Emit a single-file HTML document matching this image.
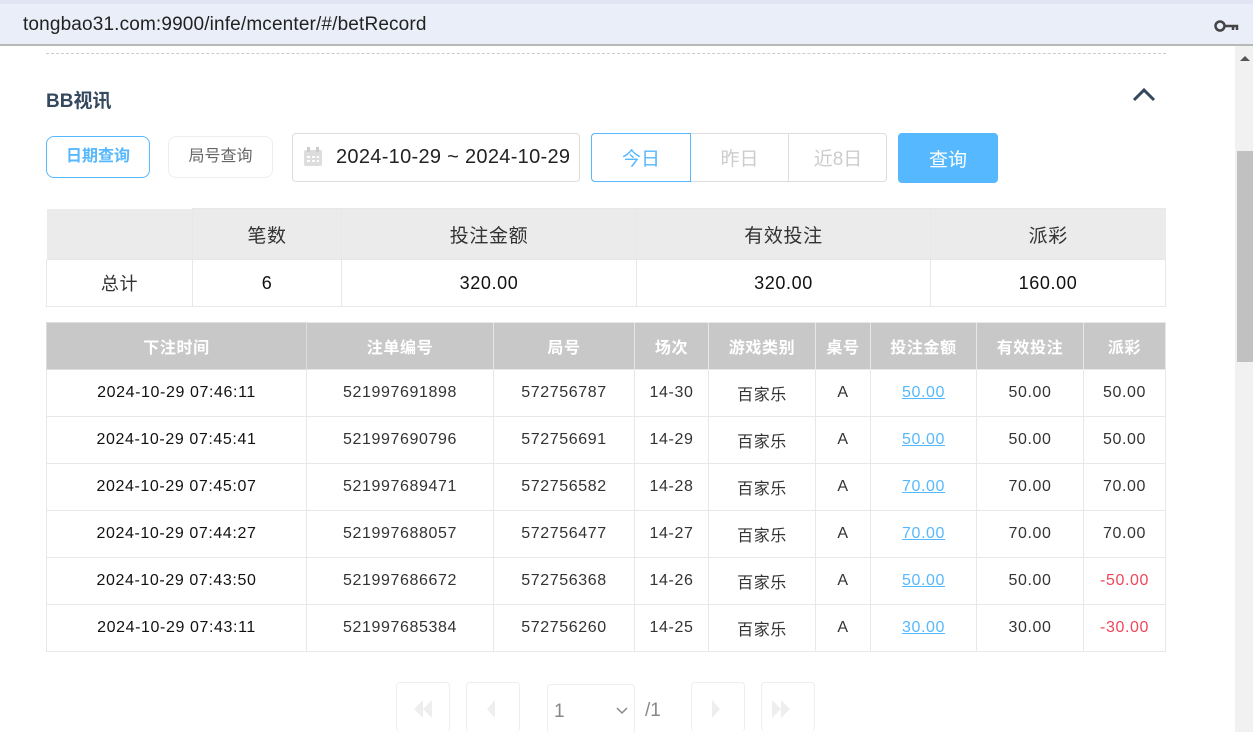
<!DOCTYPE html>
<html><head><meta charset="utf-8"><style>
*{box-sizing:border-box;margin:0;padding:0}
body{width:1253px;height:732px;overflow:hidden;background:#fff;font-family:"Liberation Sans","Noto Sans CJK SC",sans-serif;position:relative}
.addr{position:absolute;left:0;top:0;width:1253px;height:46px;background:#eaeef8;border-top:4px solid #dfe5f3;border-bottom:2px solid #b8b8b8}
.addr .t{position:absolute;left:23px;top:10px;font-size:19px;color:#222;letter-spacing:0.15px}
.sb{position:absolute;left:1235px;top:46px;width:18px;height:686px;background:#f1f1f1}
.thumb{position:absolute;left:1237px;top:151px;width:16px;height:211px;background:#c1c1c1}
.dash{position:absolute;left:46px;top:53px;width:1120px;border-top:1px dashed #ccc}
.title{position:absolute;left:46px;top:86px;font-size:19px;font-weight:bold;color:#34495e}
.btn{position:absolute;border-radius:8px;font-size:16px;text-align:center}
.cell{position:absolute;display:flex;align-items:center;justify-content:center}
table{position:absolute;border-collapse:collapse;table-layout:fixed}
td{text-align:center;border:1px solid #e8e8e8;font-size:16px;color:#333;letter-spacing:0.6px}
.pg{position:absolute;top:682px;width:54px;height:50px;border:1px solid #eee;border-radius:4px;border-bottom:none}
</style></head><body>
<div class="addr"><div class="t">tongbao31.com:9900/infe/mcenter/#/betRecord</div>
<svg style="position:absolute;left:1214px;top:14px" width="26" height="16" viewBox="0 0 26 16"><circle cx="6" cy="8" r="4.5" fill="none" stroke="#444" stroke-width="2.5"/><path d="M10 8h13v4M19 8v4" stroke="#444" stroke-width="2.5" fill="none"/></svg></div>
<div class="sb"></div><div class="thumb"></div>
<div style="position:absolute;left:1240px;top:56px;width:0;height:0;border:5px solid transparent;border-bottom:5px solid #555;border-top:none"></div>
<div class="dash"></div>
<div class="title">BB视讯</div>
<svg style="position:absolute;left:1132px;top:87px" width="24" height="16"><path d="M2 13L12 3L22 13" stroke="#34495e" stroke-width="3" fill="none"/></svg>
<div class="btn" style="left:46px;top:136px;width:104px;height:42px;border:1px solid #56b8fe;color:#56b8fe;font-weight:bold;line-height:40px">日期查询</div>
<div class="btn" style="left:168px;top:136px;width:105px;height:42px;border:1px solid #eee;color:#666;line-height:40px">局号查询</div>
<div style="position:absolute;left:292px;top:133px;width:288px;height:49px;border:1px solid #ddd;border-radius:4px"></div>
<svg style="position:absolute;left:303px;top:147px" width="20" height="20"><rect x="1" y="3" width="18" height="16" rx="2" fill="#ddd"/><rect x="4" y="0" width="3" height="5" fill="#ccc"/><rect x="13" y="0" width="3" height="5" fill="#ccc"/><g fill="#fff"><rect x="4" y="9" width="3" height="2"/><rect x="9" y="9" width="3" height="2"/><rect x="14" y="9" width="2" height="2"/><rect x="4" y="13" width="3" height="2"/><rect x="9" y="13" width="3" height="2"/><rect x="14" y="13" width="2" height="2"/></g></svg>
<div style="position:absolute;left:336px;top:146px;font-size:20px;color:#222;letter-spacing:0.3px">2024-10-29 ~ 2024-10-29</div>
<div style="position:absolute;left:591px;top:133px;width:296px;height:49px;border:1px solid #ddd;border-radius:4px"></div>
<div class="cell" style="left:591px;top:133px;width:100px;height:49px;border:1px solid #56b8fe;border-radius:4px 0 0 4px;color:#56b8fe;font-size:19px">今日</div>
<div class="cell" style="left:691px;top:133px;width:98px;height:49px;border-right:1px solid #ddd;color:#ccc;font-size:19px">昨日</div>
<div class="cell" style="left:789px;top:133px;width:98px;height:49px;color:#ccc;font-size:19px">近8日</div>
<div class="cell" style="left:898px;top:133px;width:100px;height:50px;background:#56b8fe;border-radius:4px;color:#fff;font-size:19px">查询</div>
<table style="left:46px;top:208px;width:1119px">
<colgroup><col style="width:146px"><col style="width:149px"><col style="width:295px"><col style="width:294px"><col style="width:235px"></colgroup>
<tr style="height:51px;background:#ebebeb"><td style="border-top:none;border-left:none"></td><td style="font-size:19px">笔数</td><td style="font-size:19px">投注金额</td><td style="font-size:19px">有效投注</td><td style="font-size:19px;border-right:none">派彩</td></tr>
<tr style="height:47px"><td style="font-size:18px">总计</td><td style="font-size:18px;color:#111">6</td><td style="font-size:18px;color:#111">320.00</td><td style="font-size:18px;color:#111">320.00</td><td style="font-size:18px;color:#111">160.00</td></tr>
</table>
<table style="left:46px;top:322px;width:1119px">
<colgroup><col style="width:260px"><col style="width:187px"><col style="width:141px"><col style="width:74px"><col style="width:107px"><col style="width:55px"><col style="width:106px"><col style="width:107px"><col style="width:82px"></colgroup>
<tr style="height:47px;background:#c8c8c8"><td style="color:#fff;font-weight:bold;border-color:#ddd">下注时间</td><td style="color:#fff;font-weight:bold">注单编号</td><td style="color:#fff;font-weight:bold">局号</td><td style="color:#fff;font-weight:bold">场次</td><td style="color:#fff;font-weight:bold">游戏类别</td><td style="color:#fff;font-weight:bold">桌号</td><td style="color:#fff;font-weight:bold">投注金额</td><td style="color:#fff;font-weight:bold">有效投注</td><td style="color:#fff;font-weight:bold">派彩</td></tr>
<tr style="height:47px"><td style="color:#111">2024-10-29 07:46:11</td><td>521997691898</td><td>572756787</td><td>14-30</td><td>百家乐</td><td>A</td><td style="color:#56b8fe;text-decoration:underline">50.00</td><td>50.00</td><td>50.00</td></tr>
<tr style="height:47px"><td style="color:#111">2024-10-29 07:45:41</td><td>521997690796</td><td>572756691</td><td>14-29</td><td>百家乐</td><td>A</td><td style="color:#56b8fe;text-decoration:underline">50.00</td><td>50.00</td><td>50.00</td></tr>
<tr style="height:47px"><td style="color:#111">2024-10-29 07:45:07</td><td>521997689471</td><td>572756582</td><td>14-28</td><td>百家乐</td><td>A</td><td style="color:#56b8fe;text-decoration:underline">70.00</td><td>70.00</td><td>70.00</td></tr>
<tr style="height:47px"><td style="color:#111">2024-10-29 07:44:27</td><td>521997688057</td><td>572756477</td><td>14-27</td><td>百家乐</td><td>A</td><td style="color:#56b8fe;text-decoration:underline">70.00</td><td>70.00</td><td>70.00</td></tr>
<tr style="height:47px"><td style="color:#111">2024-10-29 07:43:50</td><td>521997686672</td><td>572756368</td><td>14-26</td><td>百家乐</td><td>A</td><td style="color:#56b8fe;text-decoration:underline">50.00</td><td>50.00</td><td style="color:#f0465a">-50.00</td></tr>
<tr style="height:47px"><td style="color:#111">2024-10-29 07:43:11</td><td>521997685384</td><td>572756260</td><td>14-25</td><td>百家乐</td><td>A</td><td style="color:#56b8fe;text-decoration:underline">30.00</td><td>30.00</td><td style="color:#f0465a">-30.00</td></tr>
</table>
<div class="pg" style="left:396px"><svg width="54" height="50"><path d="M17 26l9-9v18zM26 26l9-9v18z" fill="#eee"/></svg></div>
<div class="pg" style="left:466px"><svg width="54" height="50"><path d="M20 26l8-9v18z" fill="#eee"/></svg></div>
<div class="pg" style="left:547px;top:684px;width:88px"><span style="position:absolute;left:6px;top:16px;font-size:19px;color:#888">1</span><svg style="position:absolute;left:68px;top:22px" width="12" height="8"><path d="M1 1l5 5 5-5" stroke="#888" fill="none" stroke-width="1.5"/></svg></div>
<div style="position:absolute;left:645px;top:700px;font-size:19px;color:#888">/1</div>
<div class="pg" style="left:691px"><svg width="54" height="50"><path d="M20 17l8 9-8 9z" fill="#eee"/></svg></div>
<div class="pg" style="left:761px"><svg width="54" height="50"><path d="M10 17l9 9-9 9zM19 17l9 9-9 9z" fill="#eee"/></svg></div>
</body></html>
